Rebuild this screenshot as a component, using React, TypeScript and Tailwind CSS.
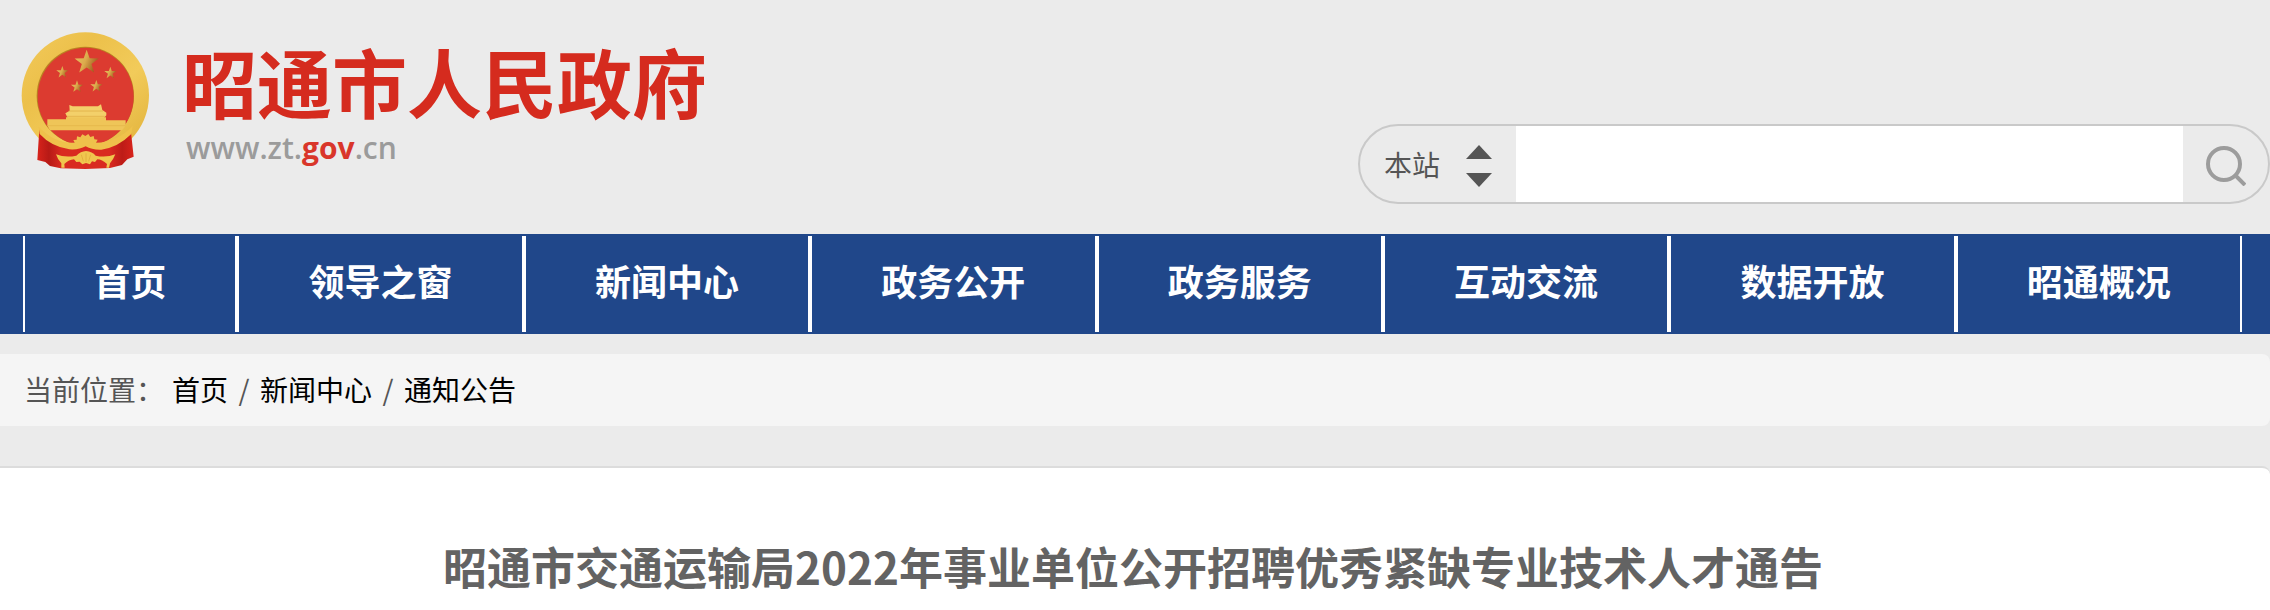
import { useState } from "react";

const NAV = [
  "首页",
  "领导之窗",
  "新闻中心",
  "政务公开",
  "政务服务",
  "互动交流",
  "数据开放",
  "昭通概况",
];

const CRUMBS = ["首页", "新闻中心", "通知公告"];

const STARS = [
  { x: 260, y: 157, r: 38 },
  { x: 187, y: 187, r: 19 },
  { x: 331, y: 189, r: 19 },
  { x: 231, y: 230, r: 19 },
  { x: 289, y: 229, r: 19 },
];

// five pointed star, first point up
const starPoints = (x: number, y: number, r: number) =>
  Array.from({ length: 10 }, (_, i) => {
    const radius = i % 2 === 0 ? r : r * 0.4;
    const angle = (Math.PI / 5) * i - Math.PI / 2;
    return `${(x + radius * Math.cos(angle)).toFixed(1)},${(y + radius * Math.sin(angle)).toFixed(1)}`;
  }).join(" ");

const Emblem = () => (
  <svg
    viewBox="60 63 396 420"
    className="h-[140px] w-[132px] shrink-0"
    aria-hidden="true"
  >
    <defs>
      <linearGradient id="gold" x1="0" y1="0" x2="1" y2="1">
        <stop offset="0" stopColor="#f2ca5c" />
        <stop offset="0.3" stopColor="#ecc04a" />
        <stop offset="0.6" stopColor="#f2cb5a" />
        <stop offset="1" stopColor="#dfae36" />
      </linearGradient>
      <linearGradient id="star" x1="0" y1="0" x2="1" y2="0.4">
        <stop offset="0" stopColor="#e9c463" />
        <stop offset="0.55" stopColor="#dcab4c" />
        <stop offset="1" stopColor="#a0601f" />
      </linearGradient>
      <linearGradient id="cloth" x1="0" y1="0" x2="1" y2="0">
        <stop offset="0" stopColor="#d8231b" />
        <stop offset="0.12" stopColor="#b71a16" />
        <stop offset="0.25" stopColor="#d92a20" />
        <stop offset="0.75" stopColor="#d92a20" />
        <stop offset="0.88" stopColor="#bd1c17" />
        <stop offset="1" stopColor="#d8231b" />
      </linearGradient>
    </defs>
    <ellipse cx="256" cy="256" rx="191" ry="189" fill="url(#gold)" />
    <path
      d="M118 358 Q170 415 256 408 Q344 415 392 358 L401 440 L382 448 L366 465 L330 474 L256 477 L182 475 L150 468 L136 456 L112 450Z"
      fill="url(#cloth)"
    />
    <ellipse cx="256" cy="258" rx="146" ry="148" fill="#b98322" />
    <ellipse cx="257" cy="260" rx="144" ry="147" fill="#dc3b30" />
    {STARS.map((s, i) => (
      <polygon key={i} points={starPoints(s.x, s.y, s.r)} fill="url(#star)" />
    ))}
    <path
      d="M208 285 L218 289 H294 L303 283 L307 300 L319 308 V316 L312 324 H203 L196 310 L209 302Z"
      fill="#f3d06a"
    />
    <path d="M206 303 H309 M201 319 H314" stroke="#dca940" strokeWidth="2" />
    <path
      d="M142 328 H198 V322 H318 V331 H377 V347 L366 361 H150 L142 347Z"
      fill="#efc558"
    />
    <path d="M142 347 H377" stroke="#e3b347" strokeWidth="2" />
    <path
      d="M116 350 Q166 402 224 398 L220 390 L230 389 L231 379 L241 382 L247 373 L256 378 L265 372 L271 381 L281 378 L283 388 L293 389 L288 398 Q350 398 398 348 L394 372 Q354 412 304 419 Q276 420 257 409 Q238 420 208 418 Q154 410 119 372Z"
      fill="#efc14b"
    />
    <path
      d="M168 433 Q196 444 229 437 Q242 424 258 423 Q277 425 287 437 Q318 444 346 433 Q340 449 330 460 L327 473 H319 L321 462 Q306 448 292 448 L285 456 L276 454 L270 463 L258 459 L247 463 L239 455 L229 456 L222 448 Q207 449 193 462 L194 473 H184 L184 460 Q173 449 168 433Z"
      fill="#f0c64e"
    />
    <path
      d="M258 430 V456 M244 434 L250 454 M272 434 L266 454"
      stroke="#dda536"
      strokeWidth="2"
    />
  </svg>
);

const App = () => {
  const [scope, setScope] = useState("本站");
  const [keyword, setKeyword] = useState("");

  return (
    <div className="min-h-screen overflow-hidden bg-[#ebebeb] font-['Noto_Sans_CJK_SC',sans-serif] text-[28px] leading-10 text-[#555]">
      <header className="flex h-[234px] justify-between">
        <a href="#" className="flex pt-[31px] pl-5">
          <Emblem />
          <div className="pt-3 pl-[30px] font-['Liberation_Sans','Noto_Sans_CJK_SC',sans-serif]">
            <p className="text-[75px] leading-[88px] font-bold whitespace-nowrap text-[#d52b1e]">
              昭通市人民政府
            </p>
            <p className="pl-1 font-['Open_Sans',sans-serif] text-[30px] leading-[34px] font-semibold text-[#9b9b9b]">
              www.zt.<span className="font-bold text-[#d9362a]">gov</span>.cn
            </p>
          </div>
        </a>
        <form
          className="mt-[124px] flex h-20 w-[912px] overflow-hidden rounded-full border-2 border-[#c9c9c9]"
          onSubmit={(e) => e.preventDefault()}
        >
          <div className="relative w-[156px] shrink-0">
            <select
              aria-label="搜索范围"
              value={scope}
              onChange={(e) => setScope(e.target.value)}
              className="h-full w-full appearance-none bg-transparent pl-6 outline-none"
            >
              <option>本站</option>
            </select>
            <svg
              viewBox="0 0 26 42"
              className="pointer-events-none absolute top-[19px] right-6 h-[42px] w-[26px]"
              fill="#555"
              aria-hidden="true"
            >
              <path d="M13 0 L26 14 H0Z" />
              <path d="M0 28 H26 L13 42Z" />
            </svg>
          </div>
          <input
            type="text"
            aria-label="搜索"
            value={keyword}
            onChange={(e) => setKeyword(e.target.value)}
            className="min-w-0 flex-1 bg-white px-4 outline-none"
          />
          <button
            type="submit"
            aria-label="搜索"
            className="flex w-[85px] shrink-0 items-center justify-center pt-1"
          >
            <svg
              viewBox="0 0 40 40"
              className="size-10"
              fill="none"
              stroke="#9c9c9c"
              strokeWidth="4"
              aria-hidden="true"
            >
              <circle cx="18" cy="18" r="16" />
              <path d="M29 29 L39 39" />
            </svg>
          </button>
        </form>
      </header>

      <nav className="bg-[#20478a] py-0.5 pr-7 pl-[23px] font-['Liberation_Sans','Noto_Sans_CJK_SC',sans-serif]">
        <ul className="flex">
          {NAV.map((item) => (
            <li key={item} className="flex-auto border-x-2 border-white">
              <a
                href="#"
                className="block px-16 text-center text-[36px] leading-[96px] font-bold whitespace-nowrap text-white"
              >
                {item}
              </a>
            </li>
          ))}
        </ul>
      </nav>

      <div className="mt-5 flex h-[72px] items-center rounded-r-lg bg-[#f5f5f5] pb-0.5 pl-6">
        <span className="mr-2">当前位置：</span>
        {CRUMBS.map((crumb, i) => (
          <span key={crumb} className="flex">
            {i > 0 && <span className="w-8 text-center">/</span>}
            <a href="#" className="text-black">
              {crumb}
            </a>
          </span>
        ))}
      </div>

      <main className="mt-10 min-h-36 rounded-tr-lg border-t-2 border-[#dcdcdc] bg-white pt-[68px] pr-1">
        <h1 className="text-center text-[44px] leading-[60px] font-bold text-[#636363]">
          昭通市交通运输局2022年事业单位公开招聘优秀紧缺专业技术人才通告
        </h1>
      </main>
    </div>
  );
};

export default App;
